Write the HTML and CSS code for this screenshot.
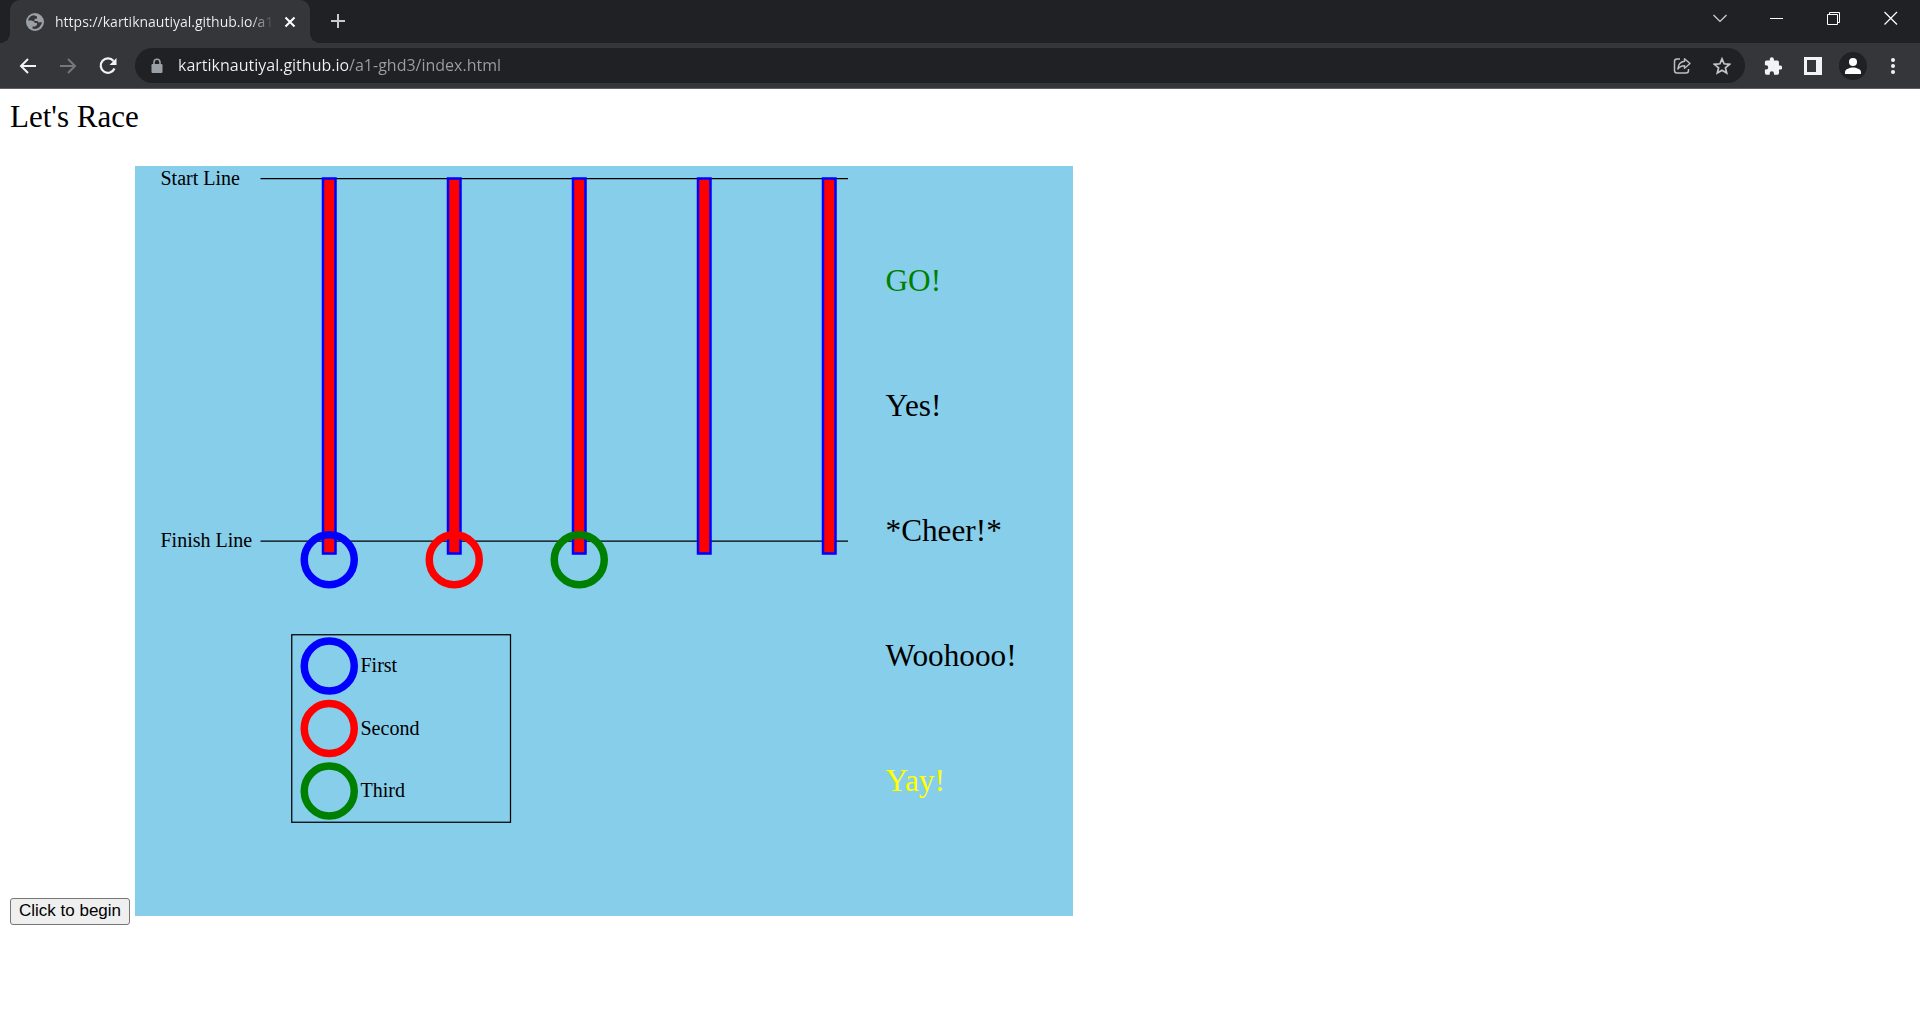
FILE: index.html
```html
<!DOCTYPE html>
<html lang="en">
<head>
<meta charset="utf-8">
<meta name="viewport" content="width=device-width, initial-scale=1">
<title>Let's Race</title>
<link rel="stylesheet" href="styles.css">
</head>
<body>
<header class="browser">
  <div class="tabstrip">
    <div class="tab">
      <svg class="icon" width="18" height="18" viewBox="0 0 18 18"><circle cx="9" cy="9" r="9" fill="#9aa0a6"/><path d="M8 2.200C5 2.500 2.500 4.500 2.200 7.500H5.500L8 8.500 9 10H11V12L9 13.500H6.500V15.500C9.500 16.500 12 15.500 13.500 14L15.700 10.500V9L12.500 9.500 11.500 8H8.500V6L11 5.500V3.500Z" fill="#35363a"/></svg>
      <span class="tab-title">https://kartiknautiyal.github.io/a1-ghd3</span>
      <button class="icon-btn tab-close" aria-label="Close tab"><svg width="12" height="12" viewBox="0 0 12 12"><path d="M1.500 1.500l9 9M10.500 1.500l-9 9" stroke="#fff" stroke-width="2"/></svg></button>
    </div>
    <button class="icon-btn new-tab" aria-label="New tab"><svg width="16" height="16" viewBox="0 0 16 16"><path d="M8 1v14M1 8h14" stroke="#c8cacd" stroke-width="2"/></svg></button>
    <div class="window-controls">
      <button class="icon-btn window-btn" aria-label="Search tabs"><svg width="14" height="14" viewBox="0 0 14 14"><path d="M.5 4l6.500 6.500L13.500 4" fill="none" stroke="#d4d5d7" stroke-width="1.200"/></svg></button>
      <button class="icon-btn window-btn" aria-label="Minimize"><svg width="14" height="14" viewBox="0 0 14 14"><path d="M0 7.500h13" stroke="#fff"/></svg></button>
      <button class="icon-btn window-btn" aria-label="Restore"><svg width="14" height="14" viewBox="0 0 14 14"><path d="M.5 3.500h10v10h-10zM2.500 3.500v-2h10v10h-2" fill="none" stroke="#fff"/></svg></button>
      <button class="icon-btn window-btn" aria-label="Close window"><svg width="14" height="14" viewBox="0 0 14 14"><path d="M.5 1l12.500 12.500M13 1L.5 13.500" stroke="#fff" stroke-width="1.200"/></svg></button>
    </div>
  </div>
  <div class="toolbar">
    <button class="icon-btn" aria-label="Back"><svg width="18" height="18" viewBox="0 0 18 18"><path d="M9 2L2 9l7 7M2 9h15" fill="none" stroke="#f1f3f4" stroke-width="2"/></svg></button>
    <button class="icon-btn" aria-label="Forward" disabled><svg width="18" height="18" viewBox="0 0 18 18"><path d="M9 2l7 7-7 7M16 9H1" fill="none" stroke="#76777a" stroke-width="2"/></svg></button>
    <button class="icon-btn" aria-label="Reload"><svg width="20" height="20" viewBox="0 0 20 20"><path d="M16.500 12.500A7.200 7.200 0 1 1 15.500 5" fill="none" stroke="#f1f3f4" stroke-width="2.200"/><path d="M18.500 2v7h-7z" fill="#f1f3f4"/></svg></button>
    <div class="omnibox">
      <svg class="icon" width="12" height="16" viewBox="0 0 12 16"><path d="M3 7V4.200a3 3 0 0 1 6 0V7" fill="none" stroke="#9aa0a6" stroke-width="1.600"/><rect x=".5" y="6" width="11" height="9" rx="1.200" fill="#9aa0a6"/></svg>
      <input class="url" type="text" aria-label="Address" value="kartiknautiyal.github.io/a1-ghd3/index.html">
      <button class="icon-btn" aria-label="Share"><svg width="18" height="18" viewBox="0 0 18 18"><path d="M7 2H4Q1.500 2 1.500 4.500v9Q1.500 16 4 16h9q2.500 0 2.500-2.500v-1.500" fill="none" stroke="#bdbec0" stroke-width="1.500"/><path d="M11.500 1.800L17 6.500l-5.500 4.800V8.800C8 8.800 6.200 10 4.800 12 5.200 8 7.500 4.800 11.500 4.300z" fill="none" stroke="#bdbec0" stroke-width="1.400" stroke-linejoin="round"/></svg></button>
      <button class="icon-btn" aria-label="Bookmark"><svg width="18" height="18" viewBox="0 0 18 18"><path d="M9 1.800l2.100 5 5.400.5-4.100 3.500 1.300 5.300L9 13.300l-4.700 2.800 1.300-5.300L1.500 7.300l5.400-.5z" fill="none" stroke="#c4c6c8" stroke-width="1.700"/></svg></button>
    </div>
    <div class="actions">
      <button class="icon-btn" aria-label="Extensions"><svg width="18" height="18" viewBox="0 0 20 20"><path d="M18 9.500h-1.400V5.700A1.700 1.700 0 0 0 15 4h-4V2.600a2.300 2.300 0 0 0-4.600 0V4H2.600A1.700 1.700 0 0 0 1 5.700v3.500h1.300a2.400 2.400 0 0 1 0 4.800H1v3.900A1.700 1.700 0 0 0 2.700 19.600h3.600v-1.400a2.400 2.400 0 0 1 4.800 0v1.400H15a1.700 1.700 0 0 0 1.700-1.700V14H18a2.200 2.200 0 0 0 0-4.500z" fill="#f1f3f4"/></svg></button>
      <button class="icon-btn" aria-label="Side panel"><svg width="18" height="18" viewBox="0 0 18 18"><path fill-rule="evenodd" d="M0 0h18v18H0zM3 3v12h9V3z" fill="#f1f3f4"/></svg></button>
      <button class="icon-btn" aria-label="Profile"><svg width="28" height="28" viewBox="0 0 28 28"><circle cx="14" cy="14" r="14" fill="#202124"/><circle cx="14" cy="10" r="4" fill="#fff"/><path d="M6 22v-2c0-3 5-4.500 8-4.500s8 1.500 8 4.500v2z" fill="#fff"/></svg></button>
      <button class="icon-btn" aria-label="Menu"><svg width="6" height="18" viewBox="0 0 6 18"><g fill="#f1f3f4"><circle cx="3" cy="3" r="2"/><circle cx="3" cy="9" r="2"/><circle cx="3" cy="15" r="2"/></g></svg></button>
    </div>
  </div>
</header>
<main class="page">
  <h1 class="title">Let's Race</h1>
  <div class="race">
    <button class="begin" type="button">Click to begin</button>
    <svg class="track" viewBox="0 0 750 600" preserveAspectRatio="xMaxYMin meet">
      <g class="label">
        <text x="20" y="15">Start Line</text>
        <text x="20" y="305">Finish Line</text>
      </g>
      <g class="line">
        <line x1="100" y1="10" x2="570" y2="10"/>
        <line x1="100" y1="300" x2="570" y2="300"/>
      </g>
      <g class="lane">
        <rect x="150" y="10" width="10" height="300"/>
        <rect x="250" y="10" width="10" height="300"/>
        <rect x="350" y="10" width="10" height="300"/>
        <rect x="450" y="10" width="10" height="300"/>
        <rect x="550" y="10" width="10" height="300"/>
      </g>
      <g class="ring">
        <circle class="first" cx="155" cy="315" r="20"/>
        <circle class="second" cx="255" cy="315" r="20"/>
        <circle class="third" cx="355" cy="315" r="20"/>
      </g>
      <rect class="legend" x="125" y="375" width="175" height="150"/>
      <g class="ring">
        <circle class="first" cx="155" cy="400" r="20"/>
        <circle class="second" cx="155" cy="450" r="20"/>
        <circle class="third" cx="155" cy="500" r="20"/>
      </g>
      <g class="label">
        <text x="180" y="405">First</text>
        <text x="180" y="455">Second</text>
        <text x="180" y="505">Third</text>
      </g>
      <g class="cheer">
        <text class="go" x="600" y="100">GO!</text>
        <text x="600" y="200">Yes!</text>
        <text x="600" y="300">*Cheer!*</text>
        <text x="600" y="400">Woohooo!</text>
        <text class="yay" x="600" y="500">Yay!</text>
      </g>
    </svg>
  </div>
</main>
</body>
</html>
```
FILE: styles.css
```css
* { box-sizing: border-box; }

body {
  margin: 0;
  background: #fff;
  color: #000;
  font-family: "Liberation Serif", "Times New Roman", serif;
}

svg { display: block; flex: none; }

.browser {
  background: #35363a;
  border-bottom: 1px solid #5f6063;
  font-family: "Open Sans", "Noto Sans", sans-serif;
}

.icon-btn {
  display: flex;
  flex: none;
  align-items: center;
  justify-content: center;
  width: 40px;
  height: 30px;
  padding: 0;
  border: 0;
  background: none;
}

.tabstrip {
  display: flex;
  height: 43px;
  padding: 0 1px 0 10px;
  background: #202124;
}

.tab {
  position: relative;
  display: flex;
  align-items: center;
  width: 300px;
  padding: 0 10px 0 16px;
  border-radius: 10px 10px 0 0;
  background: #35363a;
}

.tab::before,
.tab::after {
  content: "";
  position: absolute;
  bottom: 0;
  width: 10px;
  height: 10px;
}

.tab::before {
  right: 100%;
  background: radial-gradient(circle at 0 0, #202124 10px, #35363a 10px);
}

.tab::after {
  left: 100%;
  background: radial-gradient(circle at 100% 0, #202124 10px, #35363a 10px);
}

.tab-title {
  flex: 1;
  min-width: 0;
  margin-left: 11px;
  overflow: hidden;
  white-space: nowrap;
  font-size: 14px;
  line-height: 20px;
  color: transparent;
  background: linear-gradient(to left, #35363a, #f1f3f4 24px);
  -webkit-background-clip: text;
  background-clip: text;
}

.tab-close { width: 20px; margin-left: 6px; }

.new-tab { height: 42px; margin-left: 8px; }

.window-controls {
  display: flex;
  margin-left: auto;
}

.window-btn { width: 57px; height: 36px; }

.toolbar {
  display: flex;
  align-items: center;
  height: 45px;
  padding: 0 7px 0 8px;
}

.omnibox {
  display: flex;
  flex: 1;
  align-items: center;
  height: 35px;
  margin: 0 8px 0 7px;
  padding: 0 3px 0 16px;
  border-radius: 18px;
  background: #202124;
}

.url {
  flex: 1;
  min-width: 0;
  height: 35px;
  margin-left: 15px;
  padding: 0 0 2px;
  border: 0;
  outline: 0;
  font-family: inherit;
  font-size: 16px;
  color: transparent;
  background: linear-gradient(to right, #f1f3f4 170px, #9aa0a6 170px);
  -webkit-background-clip: text;
  background-clip: text;
}

.actions { display: flex; align-items: center; }

.page { padding: 8px 10px 10px; }

.title {
  margin: 0;
  font-size: 31px;
  font-weight: 400;
  line-height: 40px;
}

.race {
  display: flex;
  align-items: baseline;
  gap: 5px;
  margin-top: 29px;
}

.begin {
  flex: none;
  width: 120px;
  height: 27px;
  padding: 0;
  border: 1px solid #767676;
  border-radius: 3px;
  background: #efefef;
  color: #000;
  font-family: "Liberation Sans", Arial, sans-serif;
  font-size: 17px;
}

.track {
  width: 938px;
  height: 750px;
  background: skyblue;
}

.label { font-size: 16px; }
.cheer { font-size: 25px; }
.go { fill: green; }
.yay { fill: yellow; }
.line { stroke: #000; }
.lane { fill: red; stroke: blue; stroke-width: 2px; }
.ring { fill: none; stroke-width: 6px; }
.first { stroke: blue; }
.second { stroke: red; }
.third { stroke: green; }
.legend { fill: none; stroke: #000; }
```
